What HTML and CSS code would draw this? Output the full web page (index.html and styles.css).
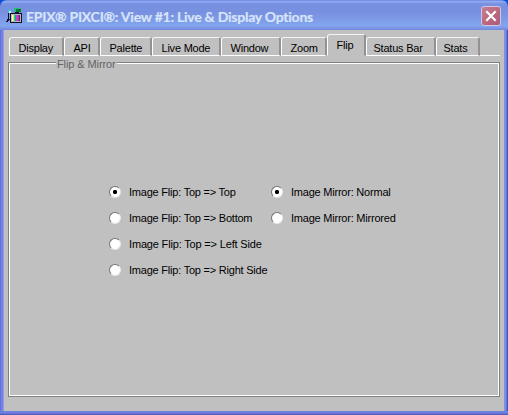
FILE: index.html
```html
<!DOCTYPE html>
<html lang="en">
<head>
<meta charset="utf-8">
<title>Live &amp; Display Options</title>
<link rel="stylesheet" href="styles.css">
</head>
<body>
<div class="window">
  <header class="titlebar">
    <svg class="app-icon" width="17" height="16" viewBox="0 0 17 16" shape-rendering="crispEdges">
      <path d="M1 1h2v1H1zM2 2h3v3H2zM4 1h1v1H4z" fill="#45b9d8"/><path d="M3 3h2v2H3z" fill="#c8eef8"/>
      <path d="M8 0h7v4H8z" fill="#30b878"/><path d="M10 1h5v3h-5z" fill="#067a34"/>
      <path d="M2 5h1v6H2zM1 11h2v2H1zM0 13h2v1H0zM3 11h1v1H3z" fill="#111126"/>
      <path d="M4 5h12v10H4zM9 4h4v1H9z" fill="#111126"/>
      <path d="M5 6h10v8H5z" fill="#b8b8c0"/>
      <path d="M6 7h8v6H6z" fill="#f4f4f4"/>
      <path d="M7 7h1v6H7z" fill="#eeee3a"/><path d="M8 7h1v6H8z" fill="#25c8d0"/><path d="M9 7h1v6H9z" fill="#17b348"/><path d="M10 7h2v6h-2z" fill="#d438cf"/><path d="M12 7h1v6h-1z" fill="#d83434"/><path d="M13 7h1v6h-1z" fill="#2732ce"/>
    </svg>
    <h1 class="title">EPIX® PIXCI®: View #1: Live &amp; Display Options</h1>
    <button class="close" aria-label="Close">
      <svg width="12" height="12" viewBox="0 0 12 12"><path d="M1.3 1.3l9.4 9.4M10.7 1.3l-9.4 9.4" stroke="#fff" stroke-width="2.2"/></svg>
    </button>
  </header>
  <main class="content">
    <nav class="tabs">
      <span class="tab"><span>Display</span></span>
      <span class="tab"><span>API</span></span>
      <span class="tab"><span>Palette</span></span>
      <span class="tab"><span>Live Mode</span></span>
      <span class="tab"><span>Window</span></span>
      <span class="tab"><span>Zoom</span></span>
      <span class="tab active"><span>Flip</span></span>
      <span class="tab tight"><span>Status Bar</span></span>
      <span class="tab tight"><span>Stats</span></span>
      <span class="rest"></span>
    </nav>
    <section class="group">
      <h2 class="legend">Flip &amp; Mirror</h2>
      <div class="options">
        <div class="column">
          <div class="option"><i class="radio checked"></i><span>Image Flip: Top =&gt; Top</span></div>
          <div class="option"><i class="radio"></i><span>Image Flip: Top =&gt; Bottom</span></div>
          <div class="option wide"><i class="radio"></i><span>Image Flip: Top =&gt; Left Side</span></div>
          <div class="option"><i class="radio"></i><span>Image Flip: Top =&gt; Right Side</span></div>
        </div>
        <div class="column">
          <div class="option"><i class="radio checked"></i><span>Image Mirror: Normal</span></div>
          <div class="option"><i class="radio"></i><span>Image Mirror: Mirrored</span></div>
        </div>
      </div>
    </section>
  </main>
</div>
</body>
</html>
```
FILE: styles.css
```css
* { box-sizing: border-box; }
body {
  margin: 0;
  background: #0a50d8;
  font: 11px/13px "Liberation Sans", Arial, sans-serif;
  letter-spacing: -0.22px;
  color: #000;
}
.window {
  width: 508px;
  height: 415px;
  overflow: hidden;
  display: flex;
  flex-direction: column;
  border-radius: 7px 7px 0 0;
  background: linear-gradient(90deg, #6470d2 0 1px, #7682e0 1px 3px, #8b9cec 3px 4px, transparent 4px 504px, #7b91e8 504px 506px, #6474da 506px 507px, #4a50b4 507px);
}
.titlebar {
  height: 30px;
  flex: none;
  display: flex;
  align-items: center;
  padding: 2px 7px 0 6px;
  background: linear-gradient(#6376d8 0, #8fa9f2 1px, #8ba5ee 2px, #7790df 4px, #7890e0 12px, #7f9fea 22px, #82a6ef 26px, #7b95e5 28px, #7487dc 30px);
}
.app-icon { flex: none; margin-top: -1px; }
.title {
  margin: 1px 0 0 3px;
  font: bold 14px/18px Lato, "Open Sans", sans-serif;
  letter-spacing: -0.24px;
  color: #d8e4fa;
  -webkit-text-stroke: 0.2px #d8e4fa;
  white-space: nowrap;
}
.close {
  width: 20px;
  height: 20px;
  margin: 0 0 0 auto;
  padding: 0;
  display: flex;
  align-items: center;
  justify-content: center;
  border: 1px solid #d0c5e4;
  border-radius: 3px;
  background: linear-gradient(135deg, #c77e91, #b9667c 60%, #a95c7c);
}
.content {
  flex: 1;
  margin: 0 4px;
  padding: 4px 4px 14px;
  background: #c0c0c0;
  display: flex;
  flex-direction: column;
}
.window::after {
  content: "";
  height: 4px;
  flex: none;
  background: linear-gradient(#7080de 0 2px, #5f66cc 3px, #4b4fb0 4px);
}
.tabs {
  display: grid;
  grid-template-columns: 55px 36px 52px 69px 60px 46px 39px 70px 44px 20px;
  height: 22px;
  margin-left: 1px;
  align-items: end;
}
.tab {
  height: 19px;
  padding-left: 8.5px;
  padding-top: 4px;
  border: solid;
  border-width: 1px 2px 1px 1px;
  border-color: #f4f4f4 #929292 #fff #fff;
  border-radius: 3px 3px 0 0;
  white-space: nowrap;
}
.tab.active {
  height: 22px;
  border-bottom-color: #c0c0c0;
}
.tab.tight { padding-left: 6.5px; }
.rest { height: 1px; background: #fff; }
.group {
  flex: 1;
  margin-top: 6px;
  width: 492px;
  border: 1px solid #808080;
  box-shadow: inset 0 0 0 1px #fff;
}
.legend {
  width: max-content;
  height: 14px;
  margin: -6px 0 0 47px;
  padding: 0 1px;
  font: 11px/14px "Liberation Sans", Arial, sans-serif;
  letter-spacing: -0.1px;
  color: #646464;
  background: #c0c0c0;
}
.options {
  display: flex;
  gap: 5px;
  margin: 108px 0 0 100px;
}
.column { width: 157px; }
.option {
  height: 26px;
  display: flex;
  align-items: center;
  gap: 8px;
  white-space: nowrap;
}
.option.wide { letter-spacing: -0.17px; }
.radio {
  width: 12px;
  height: 12px;
  flex: none;
  border-radius: 50%;
  border: 1px solid;
  border-color: #747474 #e8e8e8 #e8e8e8 #747474;
  background: #fff;
}
.checked { background: radial-gradient(circle at 5px 5px, #000 0 1.8px, #fff 2.5px); }
```
